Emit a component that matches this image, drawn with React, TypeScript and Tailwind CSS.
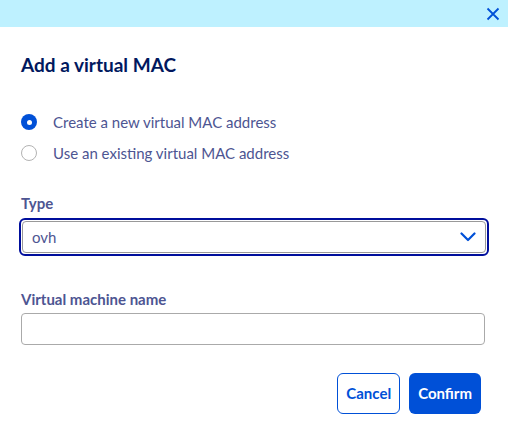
import { useState } from "react"

const AddVirtualMacModal = () => {
    const [mode, setMode] = useState<'new' | 'existing'>('new')
    const options = [
        { id: 'new' as const, label: 'Create a new virtual MAC address' },
        { id: 'existing' as const, label: 'Use an existing virtual MAC address' },
    ]

    return (
        <div className="w-[508px] h-[439px] bg-white font-['Lato','Noto_Sans',sans-serif]">
            <div className="h-[27px] bg-[#bef1ff] flex items-center justify-end pr-[8px]">
                <svg width="14" height="14" viewBox="0 0 14 14" className="text-[#0050d7]">
                    <path d="M1.5 1.5 L12.5 12.5 M12.5 1.5 L1.5 12.5" stroke="currentColor" strokeWidth="1.8" />
                </svg>
            </div>

            <div className="px-[21px]">
                <h1 className="mt-[24px] text-[19px] leading-[28px] font-bold text-[#00185e]">Add a virtual MAC</h1>

                <div className="mt-[32px] flex flex-col gap-[9px]">
                    {options.map((option) => (
                        <label key={option.id} className="flex items-center gap-[16px] h-[22px] cursor-pointer" onClick={() => setMode(option.id)}>
                            {mode === option.id ? (
                                <span className="w-[16px] h-[16px] rounded-full bg-[#0050d7] flex items-center justify-center">
                                    <span className="w-[5px] h-[5px] rounded-full bg-white"></span>
                                </span>
                            ) : (
                                <span className="w-[16px] h-[16px] rounded-full border border-[#b3b3b3] bg-white"></span>
                            )}
                            <span className="text-[15px] text-[#4d5592]">{option.label}</span>
                        </label>
                    ))}
                </div>

                <p className="mt-[29px] text-[15px] leading-[20px] font-bold text-[#4d5592]">Type</p>
                <div className="mt-[5px] -mx-[2px] rounded-[6px] border-2 border-[#000e9c] p-[1px]">
                    <div className="h-[32px] rounded-[4px] border border-[#999] flex items-center justify-between pl-[9px] pr-[9px]">
                        <span className="text-[15px] text-[#4d5592]">ovh</span>
                        <svg width="16" height="10" viewBox="0 0 16 10" className="text-[#0050d7]">
                            <path d="M1.5 1.5 L8 8 L14.5 1.5" fill="none" stroke="currentColor" strokeWidth="2.2" strokeLinecap="round" strokeLinejoin="round" />
                        </svg>
                    </div>
                </div>

                <p className="mt-[33px] text-[15px] leading-[20px] font-bold text-[#4d5592]">Virtual machine name</p>
                <input className="mt-[4px] w-[464px] h-[32px] rounded-[4px] border border-[#aaa] outline-none px-[9px] text-[15px] text-[#4d5592]" />

                <div className="mt-[28px] flex justify-end gap-[9px] pr-[6px]">
                    <button className="h-[41px] px-[8px] rounded-[6px] border border-[#0050d7] bg-white text-[#0050d7] text-[15px] font-bold">Cancel</button>
                    <button className="h-[41px] px-[9px] rounded-[6px] bg-[#0050d7] text-white text-[15px] font-bold">Confirm</button>
                </div>
            </div>
        </div>
    )
}

export default AddVirtualMacModal
